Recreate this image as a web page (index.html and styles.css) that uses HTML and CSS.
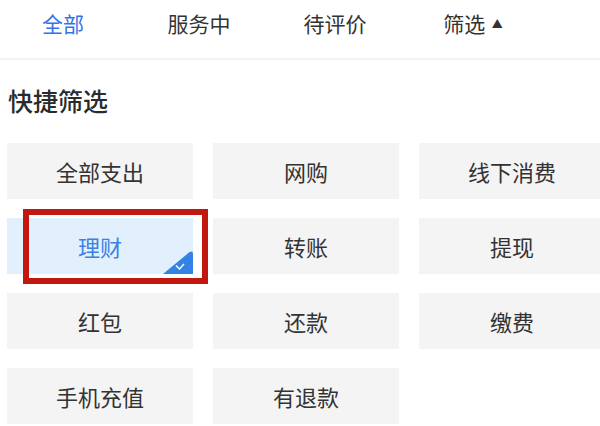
FILE: index.html
```html
<!DOCTYPE HTML>
<html>
<head>
    <title>筛选</title>
    <meta charset="utf-8">
    <link rel="stylesheet" href="styles.css">
</head>
<body>
    <div class="tabs">
        <div class="tab active">全部</div>
        <div class="tab">服务中</div>
        <div class="tab">待评价</div>
        <div class="tab">筛选 <span class="caret">▲</span></div>
    </div>
    <div class="section">
        <h2 class="sectionTitle">快捷筛选</h2>
        <div class="chips">
            <div class="chip">全部支出</div>
            <div class="chip">网购</div>
            <div class="chip">线下消费</div>
            <div class="chip selected">理财
                <svg class="corner" width="30" height="24" viewBox="0 0 30 24">
                    <path d="M30 4 Q30 0 26 2.5 L0 24 L30 24 Z" fill="#3283e4"/>
                    <polyline points="13,15.5 16.5,19 21,14" fill="none" stroke="#fff" stroke-width="1.4"/>
                </svg>
            </div>
            <div class="chip">转账</div>
            <div class="chip">提现</div>
            <div class="chip">红包</div>
            <div class="chip">还款</div>
            <div class="chip">缴费</div>
            <div class="chip">手机充值</div>
            <div class="chip">有退款</div>
        </div>
    </div>
    <div class="mark"></div>
</body>
</html>
```

FILE: styles.css
```css
* {
    box-sizing: border-box;
}

body {
    margin: 0;
    padding: 0;
    width: 600px;
    height: 426px;
    overflow: hidden;
    position: relative;
    background: #fff;
    font-family: "Noto Sans CJK SC", "Noto Sans", sans-serif;
    color: #333;
}

.tabs {
    display: grid;
    grid-template-columns: 126px 146px 126px 150px;
    height: 60px;
    align-items: center;
    border-bottom: 2px solid #f3f3f3;
}

.tab {
    text-align: center;
    font-size: 21px;
    line-height: 28px;
    color: #333;
    padding-bottom: 12px;
}

.tab.active {
    color: #2f74e8;
}

.caret {
    font-size: 11px;
    vertical-align: 4px;
    margin-left: 2px;
}

.section {
    padding-top: 25px;
}

.sectionTitle {
    margin: 0 0 28px 8px;
    font-size: 25px;
    line-height: 30px;
    font-weight: 500;
    color: #2b2b2b;
}

.chips {
    display: grid;
    grid-template-columns: repeat(3, 186px);
    column-gap: 20px;
    row-gap: 19px;
    padding-left: 7px;
}

.chip {
    position: relative;
    height: 56px;
    background: #f4f4f4;
    display: flex;
    align-items: center;
    justify-content: center;
    font-size: 22px;
    color: #333;
}

.chip.selected {
    background: #e2effd;
    color: #3a82e4;
}

.corner {
    position: absolute;
    right: 0;
    bottom: 0;
}

.mark {
    position: absolute;
    left: 23px;
    top: 209px;
    width: 185px;
    height: 75px;
    border: 6px solid #c2170f;
}
```
